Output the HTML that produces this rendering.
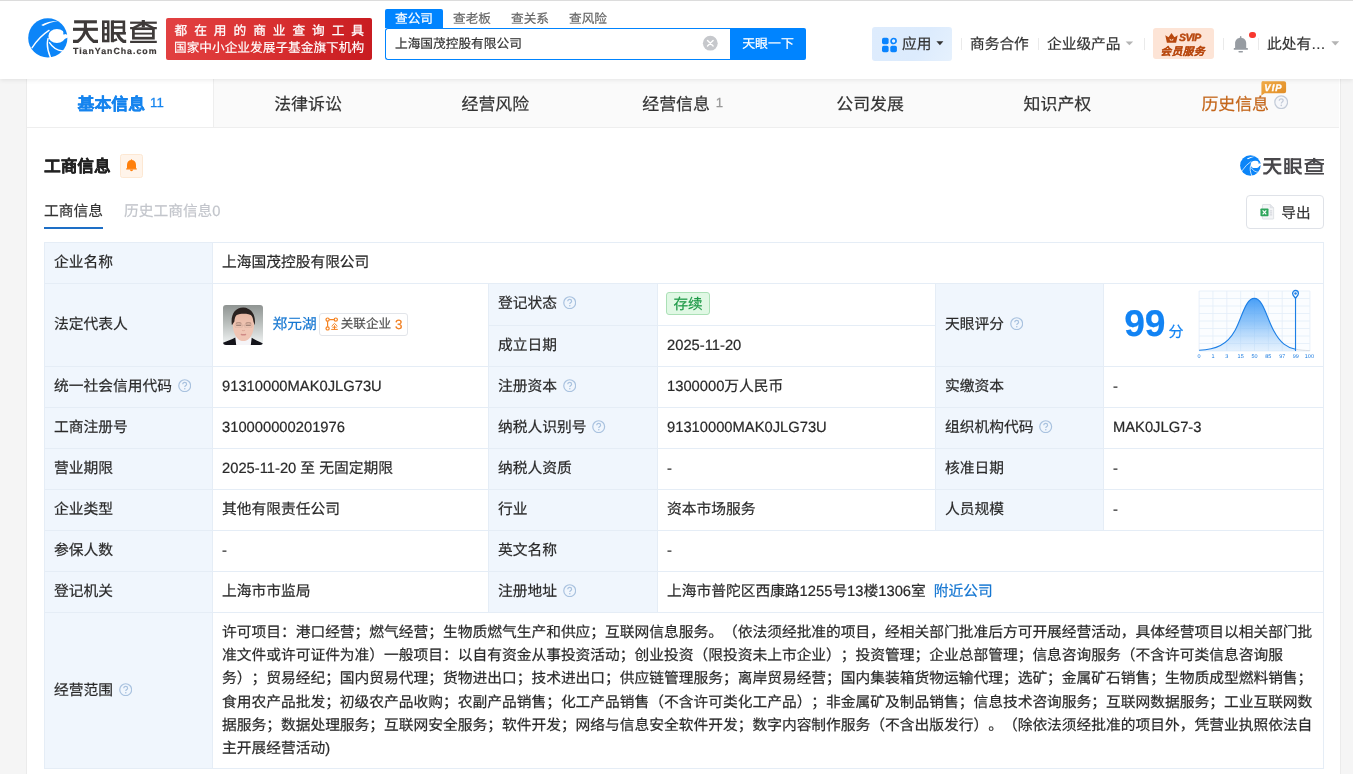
<!DOCTYPE html>
<html lang="zh-CN">
<head>
<meta charset="utf-8">
<title>上海国茂控股有限公司 - 天眼查</title>
<style>
*{box-sizing:border-box;margin:0;padding:0}
html,body{width:1353px;height:774px;overflow:hidden}
body{background:#f5f5f5;font-family:"Liberation Sans",sans-serif;color:#333;position:relative;
 text-rendering:geometricPrecision;text-spacing-trim:space-all;-webkit-font-smoothing:antialiased}
#page{position:absolute;left:0;top:0;width:1353px;height:774px;will-change:transform;-webkit-text-stroke-width:.2px}
.abs{position:absolute;white-space:nowrap}
a{text-decoration:none;color:inherit}

/* ---------- header ---------- */
#hd{position:absolute;left:0;top:0;width:1353px;height:79px;background:linear-gradient(#dcdcdc,#dcdcdc) 0 0/100% 1px no-repeat #fff;
 box-shadow:0 1px 5px rgba(0,0,0,.09);z-index:5}
#slogan{left:166px;top:18px;width:206px;height:42px;border-radius:2px;color:#fff;
 background:linear-gradient(100deg,#e24142 0%,#da3232 45%,#c81b20 100%)}
#slogan .l1{position:absolute;left:8.6px;top:6.1px;font-size:12.700px;line-height:15px;letter-spacing:6.950px;font-weight:500;-webkit-text-stroke:.25px #fff}
#slogan .l2{position:absolute;left:8px;top:22.9px;font-size:12.680px;line-height:15px;font-weight:500;-webkit-text-stroke:.15px #fff}
.stab{top:9px;height:19px;width:58px;text-align:center;font-size:12.7px;line-height:21px;color:#666}
.stab.on{background:#0084ff;color:#fff;border-radius:2px 2px 0 0}
#sbox{left:385px;top:28px;width:346px;height:32px;border:1px solid #0084ff;border-right:none;border-radius:3px 0 0 3px;background:#fff;
 font-size:12.7px;line-height:30.6px;padding-left:9px;color:#333}
#sbtn{left:730px;top:28px;width:76px;height:32px;background:#0084ff;border-radius:0 2px 2px 0;color:#fff;font-size:12.9px;line-height:31px;text-align:center}
.nav{top:35.5px;height:19px;font-size:14.7px;line-height:19px;color:#333}
.sep{position:absolute;top:38px;width:1px;height:12px;background:#eaeaea}
#app{left:872px;top:27px;width:80px;height:34px;border-radius:3px;background:linear-gradient(120deg,#deecfd 0%,#dcebfd 60%,#e6f1fd 100%)}
#svip{left:1153px;top:28px;width:61px;height:31px;border-radius:3px;background:#fde4d6;color:#b8480f;text-align:center}

/* ---------- main ---------- */
#main{position:absolute;left:27px;top:79px;width:1313.400px;height:700px;background:#fff;box-shadow:0 0 0 1px #ebebeb}
#tabs{position:absolute;left:0;top:0;width:1312.200px;height:49px;background:#fafafa;border-bottom:1px solid #eee;display:flex;padding-right:.8px}
#tabs .t{flex:1 1 0;height:48px;text-align:center;font-size:16.9px;line-height:51.2px;color:#333;white-space:nowrap;position:relative}
#tabs .t.on{color:#1684ee;font-weight:bold;height:49px;z-index:0;-webkit-text-stroke:.3px #1684ee}
#tabs .t.on:before{content:'';position:absolute;left:0;top:0;width:186px;height:48px;background:#fff;border-right:1px solid #eee;z-index:-1}
#tabs .t small{font-size:13.200px;-webkit-text-stroke:.25px;font-weight:normal;color:#999;margin-left:3px;position:relative;top:-2.9px}
#tabs .t.on small{color:#1684ee}
#tabs .t.his{color:#c4661a}

h2.sec{-webkit-text-stroke:.3px #222;left:44px;top:155px;font-size:16.7px;line-height:23px;font-weight:bold;color:#222}
#bell2{left:120px;top:154px;width:23px;height:24px;border:1px solid #fde8d3;border-radius:2.500px;background:#fff4ea}
.sub{top:202.4px;font-size:14.73px;line-height:21px}
#exp{left:1246px;top:195px;width:78px;height:34px;border:1px solid #dfe2e8;border-radius:4px;background:#fff}

/* ---------- table ---------- */
#tb{position:absolute;left:44px;top:242px;width:1280px;height:527px;background:#e5edf6}
.c{position:absolute;background:#fff;font-size:14.74px;line-height:21px;padding-left:9px;padding-top:.6px;white-space:nowrap;display:flex;align-items:center;color:#2a2a2a;-webkit-text-stroke-width:.2px}
.c.l{background:#f0f6fd}
.q{display:inline-block;width:13.4px;height:13.4px;margin-left:6px;flex:none;position:relative;top:-2px}
.blue{color:#1677d2}
</style>
</head>
<body>
<div id="page">

<!-- ================= HEADER ================= -->
<div id="hd">
  <!-- logo mark -->
  <svg class="abs" style="left:27.600px;top:18.300px" width="40" height="40" viewBox="0 0 40 40">
    <circle cx="19.800" cy="19.900" r="19.600" fill="#0c85f8"/>
    <path d="M13.200 6.900C18 4.300 24.500 2.700 30 3C25 3.900 20 5.400 15.100 7.900z" fill="#fff"/>
    <ellipse cx="28.900" cy="18" rx="8.500" ry="6.900" fill="#fff"/>
    <path d="M35 15.200L40.500 17.300V19.400L36 21.200z" fill="#fff"/>
    <path d="M36.200 11.600C37.600 13.200 37.600 15.600 36.300 16.700L35.200 16.200C35.600 14.400 35.400 13 34.600 11.800z" fill="#0c85f8"/>
    <g fill="none" stroke="#fff" stroke-linecap="round">
      <path d="M21 12.400Q11.500 18.500 4 29.800" stroke-width="1.350"/>
      <path d="M20.100 20.400C18.300 26.600 19.700 33 22.400 39.300" stroke-width="1.450"/>
      <path d="M21.500 24.600C24.500 29.500 29 32.300 34.600 33" stroke-width="1.350"/>
    </g>
  </svg>
  <!-- logo word-mark -->
  <svg class="abs" style="left:70px;top:16px" width="92" height="44" viewBox="0 0 92 44" fill="none" stroke="#3e3a39" stroke-width="3.100" stroke-linejoin="miter">
    <!-- 天 -->
    <path d="M4.1 5.8H26.9"/><path d="M3 13.3H27.9"/>
    <path d="M15.4 5.8V12.8C14.8 18.4 11.6 22.4 7.6 25.4H3"/>
    <path d="M15.8 13.8C17.2 18.8 20 22.6 23.6 25.4H28"/>
    <!-- 眼 -->
    <rect x="33.3" y="5.7" width="4.9" height="19.3" stroke-width="2.6"/>
    <path d="M33.3 12.2H38.2M33.3 18.4H38.2" stroke-width="2.3"/>
    <path d="M42.4 4.4V26.2"/>
    <path d="M42.4 5.8H53.9V17.3" stroke-width="2.6"/>
    <path d="M42.4 11.5H53.9" stroke-width="2.4"/>
    <path d="M42.4 17.3H55.9" stroke-width="2.6"/>
    <path d="M47.4 17.6C48.8 21.4 51 24 53.4 25.4H56.2"/>
    <path d="M42.4 25.2L47 23.4" stroke-width="2.4"/>
    <!-- 查 -->
    <g stroke-width="2.2">
    <path d="M60.1 6.7H86.8"/><path d="M73.3 4V11.4" stroke-width="3.2"/>
    <path d="M72.6 7.4L63.4 12.1H60.1M74 7.4L83.4 12.1H86.8" stroke-width="2.4"/>
    <rect x="63.4" y="12.7" width="20" height="9.5" stroke-width="2.7"/>
    <path d="M63.4 17.6H83.4" stroke-width="1.9"/>
    <path d="M60.1 25.9H86.8"/>
    </g>
  </svg>
  <div class="abs" style="left:73px;top:46.2px;font-size:8.800px;line-height:10px;font-weight:bold;letter-spacing:.98px;color:#3e3a39">TianYanCha.com</div>

  <!-- slogan -->
  <div id="slogan" class="abs">
    <div class="l1">都在用的商业查询工具</div>
    <div class="l2">国家中小企业发展子基金旗下机构</div>
  </div>

  <!-- search -->
  <div class="abs stab on" style="left:385px">查公司</div>
  <div class="abs stab" style="left:443px">查老板</div>
  <div class="abs stab" style="left:501px">查关系</div>
  <div class="abs stab" style="left:559px">查风险</div>
  <div id="sbox" class="abs">上海国茂控股有限公司</div>
  <svg class="abs" style="left:702px;top:35px" width="16" height="16" viewBox="0 0 16 16"><circle cx="8.3" cy="8.2" r="7.4" fill="#c6c8cc"/><path d="M5.5 5.4l5.6 5.6M11.1 5.4l-5.6 5.6" stroke="#fff" stroke-width="1.4" stroke-linecap="round"/></svg>
  <div id="sbtn" class="abs">天眼一下</div>

  <!-- right nav -->
  <div id="app" class="abs"></div>
  <svg class="abs" style="left:882px;top:36.500px" width="16" height="16" viewBox="0 0 16 16">
    <rect x="0" y="0.7" width="6.6" height="6.6" rx="1.7" fill="#0a84ff"/>
    <circle cx="11.600" cy="4" r="2.500" fill="#e9f3fe" stroke="#0a84ff" stroke-width="1.700"/>
    <rect x="0" y="8.7" width="6.6" height="6.6" rx="1.7" fill="#0a84ff"/>
    <rect x="8.3" y="8.7" width="6.6" height="6.6" rx="1.7" fill="#0a84ff"/>
  </svg>
  <div class="abs nav" style="left:902px">应用</div>
  <svg class="abs" style="left:936px;top:41px" width="8" height="5" viewBox="0 0 8 5"><path d="M0.4 0.3h7L3.9 4.2z" fill="#333"/></svg>
  <div class="sep" style="left:961px"></div>
  <div class="abs nav" style="left:970px">商务合作</div>
  <div class="sep" style="left:1038px"></div>
  <div class="abs nav" style="left:1047px">企业级产品</div>
  <svg class="abs" style="left:1125px;top:41px" width="9" height="5" viewBox="0 0 9 5"><path d="M0.6 0.4h7.6L4.4 4.3z" fill="#b4b4b4"/></svg>
  <div class="sep" style="left:1144px"></div>
  <div id="svip" class="abs">
    <svg class="abs" style="left:12px;top:4.5px" width="13" height="10" viewBox="0 0 13 10"><path d="M0.300 2.200l3.200 2L6.500 0l3 4.200 3.200-2-1.600 7.600H1.900z" fill="#b8480f"/><path d="M4.500 5.400l2 1.700 2-1.700-.5 2.200H5z" fill="#fde4d6"/></svg>
    <div class="abs" style="left:26px;top:5px;font-size:10.400px;line-height:11px;font-weight:bold;font-style:italic;letter-spacing:-0.500px;-webkit-text-stroke:.45px #b8480f">SVIP</div>
    <div class="abs" style="left:7.5px;top:17.5px;font-size:10.600px;line-height:12px;font-weight:bold;font-style:italic;letter-spacing:0.550px">会员服务</div>
  </div>
  <div class="sep" style="left:1223px"></div>
  <svg class="abs" style="left:1233px;top:35px" width="17" height="18" viewBox="0 0 17 18" fill="#979ca2"><rect x="7" y=".9" width="1.300" height="2.400" rx=".5"/><path d="M2.100 13.500V8.100C2.100 4.900 4.600 2.700 7.650 2.700S13.200 4.900 13.200 8.100v5.400z"/><rect x=".75" y="13.100" width="14.150" height="1.600" rx=".5"/><rect x="5.400" y="16" width="4.600" height="1.400" rx=".7"/></svg>
  <div class="abs" style="left:1249.200px;top:31.700px;width:6.600px;height:6.600px;border-radius:50%;background:#f8382f"></div>
  <div class="sep" style="left:1258px"></div>
  <div class="abs nav" style="left:1267px">此处有…</div>
  <svg class="abs" style="left:1331px;top:41px" width="9" height="5" viewBox="0 0 9 5"><path d="M0.4 0.2h7.8L4.3 4.5z" fill="#b4b4b4"/></svg>
</div>

<!-- ================= MAIN ================= -->
<div id="main">
  <div id="tabs">
    <div class="t on">基本信息<small style="margin-left:5px">11</small></div>
    <div class="t">法律诉讼</div>
    <div class="t">经营风险</div>
    <div class="t">经营信息<small style="margin-left:6px">1</small></div>
    <div class="t">公司发展</div>
    <div class="t">知识产权</div>
    <div class="t his">历史信息<svg style="display:inline-block;vertical-align:.7px;margin-left:4.600px" width="14.400" height="14.400" viewBox="0 0 14 14"><circle cx="7" cy="7" r="6.200" fill="#f6f7fa" stroke="#c3cbd8" stroke-width="1.200"/><path d="M5.100 5.600c0-1.200.9-1.900 1.900-1.900s1.900.7 1.900 1.700c0 1.300-1.800 1.400-1.800 2.800" fill="none" stroke="#c3cbd8" stroke-width="1.200"/><circle cx="7.100" cy="10.100" r=".75" fill="#c3cbd8"/></svg>
      <svg style="position:absolute;left:110.400px;top:1.700px" width="26" height="15" viewBox="0 0 26 15"><defs><linearGradient id="vg" x1="0" y1="0" x2="1" y2="1"><stop offset="0" stop-color="#f3ae4a"/><stop offset="1" stop-color="#df8a22"/></linearGradient></defs><path d="M2.800 .2h20.300a2 2 0 0 1 2 2v8a2 2 0 0 1-2 2H3.600L.4 14.600V2.200a2 2 0 0 1 2.400-2z" fill="url(#vg)"/><text x="3.300" y="9.900" font-family="Liberation Sans, sans-serif" font-size="9.400" font-weight="bold" font-style="italic" fill="#fff" stroke="#fff" stroke-width=".35" letter-spacing="1.100">VIP</text></svg>
    </div>
  </div>
</div>

<h2 class="abs sec">工商信息</h2>
<div id="bell2" class="abs"><svg class="abs" style="left:4.100px;top:3.600px" width="13" height="14" viewBox="0 0 13 14" fill="#ff7f0a"><circle cx="6.500" cy=".9" r=".65"/><path d="M2 9.800V5.500C2 2.800 4 1 6.500 1S11 2.800 11 5.500v4.300z"/><rect x="1.100" y="9.300" width="10.800" height="1.300" rx=".65"/><path d="M5 10.600h3c0 1-.7 1.700-1.500 1.700S5 11.600 5 10.600z"/></svg></div>

<!-- small brand on the right -->
<svg class="abs" style="left:1239.700px;top:154.800px" width="21" height="21" viewBox="0 0 40 40">
  <circle cx="19.800" cy="19.900" r="19.600" fill="#0c85f8"/>
    <path d="M13.200 6.900C18 4.300 24.500 2.700 30 3C25 3.900 20 5.400 15.100 7.900z" fill="#fff"/>
    <ellipse cx="28.900" cy="18" rx="8.500" ry="6.900" fill="#fff"/>
    <path d="M35 15.200L40.500 17.300V19.400L36 21.200z" fill="#fff"/>
    <path d="M36.200 11.600C37.600 13.200 37.600 15.600 36.300 16.700L35.200 16.200C35.600 14.400 35.400 13 34.600 11.800z" fill="#0c85f8"/>
    <g fill="none" stroke="#fff" stroke-linecap="round">
      <path d="M21 12.400Q11.500 18.500 4 29.800" stroke-width="1.350"/>
      <path d="M20.100 20.400C18.300 26.600 19.700 33 22.400 39.300" stroke-width="1.450"/>
      <path d="M21.500 24.600C24.500 29.500 29 32.300 34.600 33" stroke-width="1.350"/>
    </g>
</svg>
<svg class="abs" style="left:1261.4px;top:154.7px" width="66.8" height="31.9" viewBox="0 0 92 44" fill="none" stroke="#48474b" stroke-width="3.300">
    <path d="M4.1 5.8H26.9"/><path d="M3 13.3H27.9"/>
    <path d="M15.4 5.8V12.8C14.8 18.4 11.6 22.4 7.6 25.4H3"/>
    <path d="M15.8 13.8C17.2 18.8 20 22.6 23.6 25.4H28"/>
    <rect x="33.3" y="5.7" width="4.9" height="19.3" stroke-width="2.6"/>
    <path d="M33.3 12.2H38.2M33.3 18.4H38.2" stroke-width="2.3"/>
    <path d="M42.4 4.4V26.2"/>
    <path d="M42.4 5.8H53.9V17.3" stroke-width="2.6"/>
    <path d="M42.4 11.5H53.9" stroke-width="2.4"/>
    <path d="M42.4 17.3H55.9" stroke-width="2.6"/>
    <path d="M47.4 17.6C48.8 21.4 51 24 53.4 25.4H56.2"/>
    <path d="M42.4 25.2L47 23.4" stroke-width="2.4"/>
    <g stroke-width="2.2">
    <path d="M60.1 6.7H86.8"/><path d="M73.3 4V11.4" stroke-width="3.2"/>
    <path d="M72.6 7.4L63.4 12.1H60.1M74 7.4L83.4 12.1H86.8" stroke-width="2.4"/>
    <rect x="63.4" y="12.7" width="20" height="9.5" stroke-width="2.7"/>
    <path d="M63.4 17.6H83.4" stroke-width="1.9"/>
    <path d="M60.1 25.9H86.8"/>
    </g>
</svg>

<div class="abs sub" style="left:44px;color:#333">工商信息</div>
<div class="abs" style="left:44px;top:227px;width:59px;height:2px;background:#1e6fc6"></div>
<div class="abs sub" style="left:124px;color:#c2c5cb">历史工商信息0</div>

<div id="exp" class="abs">
  <svg class="abs" style="left:13.2px;top:8.4px" width="14.8" height="15.6" viewBox="0 0 16 17">
    <path d="M3.2 0.6h8l3.6 3.6v11.6a.6.6 0 0 1-.6.6H3.2a.6.6 0 0 1-.6-.6V1.200a.6.6 0 0 1 .6-.6z" fill="#f4f5f7" stroke="#d5d8de" stroke-width=".8"/>
    <path d="M11.200.6v3.600h3.600" fill="#e3e5ea" stroke="#d5d8de" stroke-width=".6"/>
    <path d="M10.600 7.500h2.600M10.600 9.700h2.600M10.600 11.900h2.600" stroke="#c9ccd3" stroke-width="1"/>
    <rect x="0.400" y="5" width="8.800" height="8.400" rx=".8" fill="#2ea55c"/>
    <path d="M2.800 7l4 4.400M6.800 7l-4 4.400" stroke="#fff" stroke-width="1.300"/>
  </svg>
  <div class="abs" style="left:34.3px;top:8px;font-size:14.6px;line-height:21px;color:#333">导出</div>
</div>

<!-- ================= TABLE ================= -->
<div id="tb">
  <!-- row 1 : y 1..41 -->
  <div class="c l" style="left:1px;top:1px;width:167px;height:40px">企业名称</div>
  <div class="c"   style="left:169px;top:1px;width:1110px;height:40px">上海国茂控股有限公司</div>

  <!-- row 2 : y 42..124 -->
  <div class="c l" style="left:1px;top:42px;width:167px;height:82px">法定代表人</div>
  <div class="c"   style="left:169px;top:42px;width:275px;height:82px;padding-left:10px">
    <svg style="flex:none;border-radius:3px" width="40" height="40" viewBox="0 0 40 40">
      <defs><linearGradient id="pbg" x1="0" y1="0" x2="0" y2="1"><stop offset="0" stop-color="#8f9492"/><stop offset=".45" stop-color="#b9bebc"/><stop offset="1" stop-color="#f3f6f6"/></linearGradient>
      <linearGradient id="skin" x1="0" y1="0" x2="0" y2="1"><stop offset="0" stop-color="#e6b6a2"/><stop offset=".5" stop-color="#f0c6b4"/><stop offset="1" stop-color="#efc4b4"/></linearGradient></defs>
      <rect width="40" height="40" fill="url(#pbg)"/>
      <path d="M12 32.500h16.800V40H12z" fill="#f5f4f7"/>
      <path d="M0 40v-2.200c4.200-1.900 8.600-2.900 12.300-5.200L13.200 40zM40 40v-1.500c-4-2-8-3.300-11.300-5.700L27.800 40z" fill="#14141b"/>
      <path d="M9.700 19.500C9.500 12.500 13 7.600 20.500 7.600S31.400 12.500 31.100 19.500c-.2 5.500-1.600 10.300-4.400 13.400-2 2.200-4.100 3.100-6.300 3.100s-4.300-.9-6.300-3.100c-2.800-3.100-4.200-7.900-4.400-13.400z" fill="url(#skin)"/>
      <path d="M8.900 20.200C7.300 10.200 11.800 2.600 20.200 2.600c8.500 0 13 7.600 11.500 17.600l-1.300-3.800c-.3-3.400-1.300-5.600-2.500-6.500-4-1.600-10.600-1.600-14.200.1-1.300 1.200-2.100 3.200-2.300 6.400z" fill="#2a2220"/>
      <path d="M12.800 18.300c1.700-.7 4-.7 5.600 0M22.600 18.300c1.700-.7 4-.7 5.600 0" stroke="#8d6a5e" stroke-width=".9" fill="none" opacity=".85"/>
      <path d="M13.200 20.200h5M22.800 20.200h5" stroke="#5d4a44" stroke-width="1.100" opacity=".7"/>
      <path d="M12 19.600h7.200v2.600H12zM21.800 19.600H29v2.600h-7.200zM19.200 20.400h2.600" stroke="#c9a596" stroke-width=".5" fill="none" opacity=".8"/>
      <path d="M17.800 29.300c1.700.6 3.600.6 5.300 0" stroke="#cf8a86" stroke-width="1.400" fill="none"/>
      <path d="M19 25.300c.9.500 2 .5 2.900 0" stroke="#d9a594" stroke-width=".9" fill="none"/>
    </svg>
    <span class="blue" style="margin-left:9.500px">郑元湖</span>
    <span style="display:inline-flex;align-items:center;margin-left:2.500px;height:22.400px;width:89px;position:relative;top:-.8px;border:1px solid #e2e5ea;border-radius:3px;font-size:12.600px;color:#555;padding-left:5px;line-height:21px">
      <svg style="flex:none" width="14" height="14" viewBox="0 0 14 14" fill="none" stroke="#f58220" stroke-width="1.200"><circle cx="2.600" cy="2.600" r="1.600"/><circle cx="10.800" cy="2.600" r="1.600"/><circle cx="2.600" cy="11.400" r="1.600"/><path d="M4.200 2.600h5M2.600 4.200v5.600"/><path d="M6.200 12.400h6.600M9.500 12.400V8.400M7.300 10.200h4.400M6.600 9.200L9.500 6.400l2.900 2.800" stroke-width="1"/></svg>
      <span style="margin-left:1.500px">关联企业</span><span style="margin-left:4px;color:#f07c1c;font-size:13.400px">3</span>
    </span>
  </div>
  <div class="c l" style="left:445px;top:42px;width:168px;height:41px">登记状态<svg class="q" viewBox="0 0 14 14"><use href="#qm"/></svg></div>
  <div class="c"   style="left:614px;top:42px;width:277px;height:41px"><span style="display:inline-block;width:44px;height:22.8px;border:1px solid #abe0b6;border-radius:3px;background:#e0f8e4;color:#1f9a48;text-align:center;line-height:25.2px;font-size:14.6px;margin-left:-1px;position:relative;top:-1.4px">存续</span></div>
  <div class="c l" style="left:445px;top:84px;width:168px;height:40px">成立日期</div>
  <div class="c"   style="left:614px;top:84px;width:277px;height:40px">2025-11-20</div>
  <div class="c l" style="left:892px;top:42px;width:167px;height:82px">天眼评分<svg class="q" viewBox="0 0 14 14"><use href="#qm"/></svg></div>
  <div class="c"   style="left:1060px;top:42px;width:219px;height:82px;padding:0">
    <div class="abs" style="left:20.300px;top:18.100px;font-size:37.200px;line-height:42px;font-weight:bold;color:#1283f3;letter-spacing:-0.300px">99</div>
    <div class="abs" style="left:64.500px;top:37.500px;font-size:15px;line-height:21px;color:#1283f3">分</div>
    <svg class="abs" style="left:90px;top:4.400px" width="125" height="76" viewBox="0 0 125 76">
      <defs><linearGradient id="bell" x1="0" y1="0" x2="0" y2="1"><stop offset="0" stop-color="#3f9af6" stop-opacity=".95"/><stop offset=".5" stop-color="#6db3f8" stop-opacity=".7"/><stop offset="1" stop-color="#bcdcfb" stop-opacity=".35"/></linearGradient></defs>
      <rect x="5.100" y="3" width="110.800" height="60" fill="#fbfdff"/>
      <g stroke="#e3edf9" stroke-width=".8">
        <path d="M5.100 3v60M18.950 3v60M32.800 3v60M46.650 3v60M60.500 3v60M74.350 3v60M88.200 3v60M102.050 3v60M115.900 3v60"/>
        <path d="M5.100 3h110.800M5.100 10.500h110.800M5.100 18h110.800M5.100 25.500h110.800M5.100 33h110.800M5.100 40.500h110.800M5.100 48h110.800M5.100 55.500h110.800M5.100 63h110.800"/>
      </g>
      <path id="bc" d="M5.100 62.300C22 61.600 33 57 41 42.500 48 29.500 51.500 10.400 60.300 10.400 69 10.400 72.600 29.500 79.600 42.500 86.600 55.500 93 59.600 101.500 61.200V63H5.100z" fill="url(#bell)"/>
      <path d="M5.100 62.300C22 61.600 33 57 41 42.500 48 29.500 51.500 10.400 60.300 10.400 69 10.400 72.600 29.500 79.600 42.500 86.600 55.500 93 59.600 101.500 61.200" fill="none" stroke="#1c7fe6" stroke-width="1.100"/>
      <path d="M101.500 61.200C106 62.100 110 62.500 115.900 62.600" fill="none" stroke="#d7dce2" stroke-width="1"/>
      <path d="M101.500 9v54" stroke="#1c7fe6" stroke-width="1.100"/>
      <path d="M101.500 10.200c-2-2.400-2.900-3.300-2.900-4.800a2.900 2.900 0 0 1 5.800 0c0 1.500-.9 2.400-2.900 4.800z" fill="#fff" stroke="#1c7fe6" stroke-width="1.300"/>
      <circle cx="101.500" cy="5.400" r="1.250" fill="#1c7fe6"/>
      <g font-family="Liberation Sans, sans-serif" font-size="5.500" fill="#1a7be0" text-anchor="middle">
        <text x="5.100" y="70.300">0</text><text x="18.950" y="70.300">1</text><text x="32.800" y="70.300">3</text><text x="46.650" y="70.300">15</text><text x="60.500" y="70.300">50</text><text x="74.350" y="70.300">85</text><text x="88.200" y="70.300">97</text><text x="101.800" y="70.300">99</text><text x="115.400" y="70.300">100</text>
      </g>
    </svg>
  </div>

  <!-- row 3 -->
  <div class="c l" style="left:1px;top:125px;width:167px;height:40px">统一社会信用代码<svg class="q" viewBox="0 0 14 14"><use href="#qm"/></svg></div>
  <div class="c"   style="left:169px;top:125px;width:275px;height:40px">91310000MAK0JLG73U</div>
  <div class="c l" style="left:445px;top:125px;width:168px;height:40px">注册资本<svg class="q" viewBox="0 0 14 14"><use href="#qm"/></svg></div>
  <div class="c"   style="left:614px;top:125px;width:277px;height:40px">1300000万人民币</div>
  <div class="c l" style="left:892px;top:125px;width:167px;height:40px">实缴资本</div>
  <div class="c"   style="left:1060px;top:125px;width:219px;height:40px">-</div>

  <!-- row 4 -->
  <div class="c l" style="left:1px;top:166px;width:167px;height:40px">工商注册号</div>
  <div class="c"   style="left:169px;top:166px;width:275px;height:40px">310000000201976</div>
  <div class="c l" style="left:445px;top:166px;width:168px;height:40px">纳税人识别号<svg class="q" viewBox="0 0 14 14"><use href="#qm"/></svg></div>
  <div class="c"   style="left:614px;top:166px;width:277px;height:40px">91310000MAK0JLG73U</div>
  <div class="c l" style="left:892px;top:166px;width:167px;height:40px">组织机构代码<svg class="q" viewBox="0 0 14 14"><use href="#qm"/></svg></div>
  <div class="c"   style="left:1060px;top:166px;width:219px;height:40px">MAK0JLG7-3</div>

  <!-- row 5 -->
  <div class="c l" style="left:1px;top:207px;width:167px;height:40px">营业期限</div>
  <div class="c"   style="left:169px;top:207px;width:275px;height:40px">2025-11-20 至 无固定期限</div>
  <div class="c l" style="left:445px;top:207px;width:168px;height:40px">纳税人资质</div>
  <div class="c"   style="left:614px;top:207px;width:277px;height:40px">-</div>
  <div class="c l" style="left:892px;top:207px;width:167px;height:40px">核准日期</div>
  <div class="c"   style="left:1060px;top:207px;width:219px;height:40px">-</div>

  <!-- row 6 -->
  <div class="c l" style="left:1px;top:248px;width:167px;height:40px">企业类型</div>
  <div class="c"   style="left:169px;top:248px;width:275px;height:40px">其他有限责任公司</div>
  <div class="c l" style="left:445px;top:248px;width:168px;height:40px">行业</div>
  <div class="c"   style="left:614px;top:248px;width:277px;height:40px">资本市场服务</div>
  <div class="c l" style="left:892px;top:248px;width:167px;height:40px">人员规模</div>
  <div class="c"   style="left:1060px;top:248px;width:219px;height:40px">-</div>

  <!-- row 7 -->
  <div class="c l" style="left:1px;top:289px;width:167px;height:40px">参保人数</div>
  <div class="c"   style="left:169px;top:289px;width:275px;height:40px">-</div>
  <div class="c l" style="left:445px;top:289px;width:168px;height:40px">英文名称</div>
  <div class="c"   style="left:614px;top:289px;width:665px;height:40px">-</div>

  <!-- row 8 -->
  <div class="c l" style="left:1px;top:330px;width:167px;height:40px">登记机关</div>
  <div class="c"   style="left:169px;top:330px;width:275px;height:40px">上海市市监局</div>
  <div class="c l" style="left:445px;top:330px;width:168px;height:40px">注册地址<svg class="q" viewBox="0 0 14 14"><use href="#qm"/></svg></div>
  <div class="c"   style="left:614px;top:330px;width:665px;height:40px">上海市普陀区西康路1255号13楼1306室<span class="blue" style="margin-left:8px">附近公司</span></div>

  <!-- row 9 -->
  <div class="c l" style="left:1px;top:371px;width:167px;height:155px;padding-top:2.6px">经营范围<svg class="q" viewBox="0 0 14 14"><use href="#qm"/></svg></div>
  <div class="c"   style="left:169px;top:371px;width:1110px;height:155px;display:block;padding-top:9px;line-height:23.200px">许可项目：港口经营；燃气经营；生物质燃气生产和供应；互联网信息服务。（依法须经批准的项目，经相关部门批准后方可开展经营活动，具体经营项目以相关部门批<br>准文件或许可证件为准）一般项目：以自有资金从事投资活动；创业投资（限投资未上市企业）；投资管理；企业总部管理；信息咨询服务（不含许可类信息咨询服<br>务）；贸易经纪；国内贸易代理；货物进出口；技术进出口；供应链管理服务；离岸贸易经营；国内集装箱货物运输代理；选矿；金属矿石销售；生物质成型燃料销售；<br>食用农产品批发；初级农产品收购；农副产品销售；化工产品销售（不含许可类化工产品）；非金属矿及制品销售；信息技术咨询服务；互联网数据服务；工业互联网数<br>据服务；数据处理服务；互联网安全服务；软件开发；网络与信息安全软件开发；数字内容制作服务（不含出版发行）。（除依法须经批准的项目外，凭营业执照依法自<br>主开展经营活动)</div>
</div>

<!-- shared symbol for the "?" help icon -->
<svg width="0" height="0" style="position:absolute"><defs>
  <g id="qm"><circle cx="7" cy="7" r="6.200" fill="none" stroke="#a9c2df" stroke-width="1.250"/><path d="M5 5.600c0-1.200.9-2 2-2s2 .7 2 1.800c0 1.300-1.900 1.500-1.900 2.900" fill="none" stroke="#a9c2df" stroke-width="1.250"/><circle cx="7.100" cy="10.300" r=".8" fill="#a9c2df"/></g>
</defs></svg>

</div>
</body>
</html>
